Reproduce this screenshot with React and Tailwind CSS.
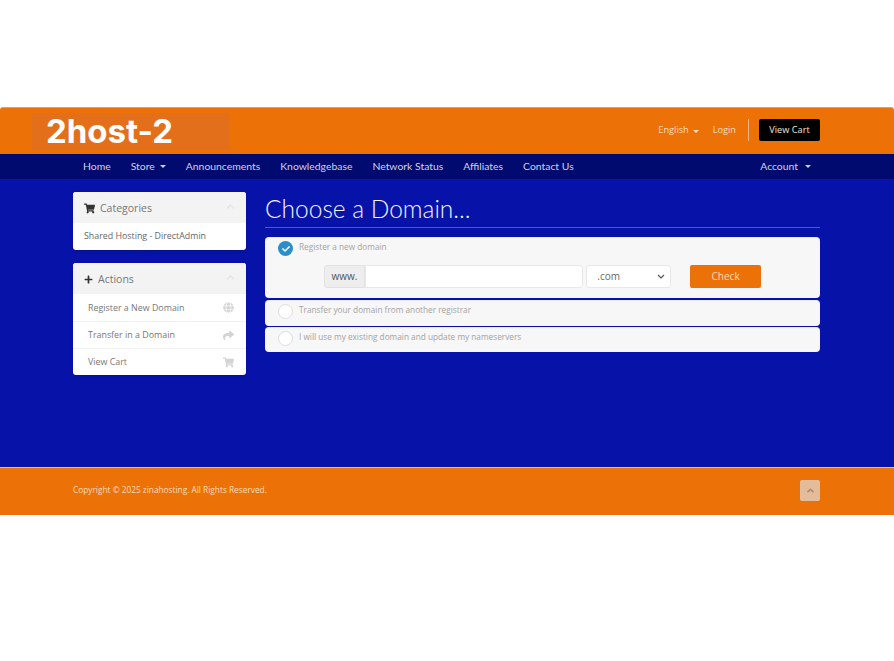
import React from "react";
import { FaShoppingCart, FaPlus, FaGlobe, FaShare, FaChevronUp, FaAngleUp, FaCheck } from "react-icons/fa";

const openSans = "font-['Open_Sans',sans-serif]";
const navFont = "font-['Lato',sans-serif]";

const navLinks = [
  { label: "Home" },
  { label: "Store", caret: true },
  { label: "Announcements" },
  { label: "Knowledgebase" },
  { label: "Network Status" },
  { label: "Affiliates" },
  { label: "Contact Us" },
];

const actions = [
  { label: "Register a New Domain", icon: FaGlobe },
  { label: "Transfer in a Domain", icon: FaShare },
  { label: "View Cart", icon: FaShoppingCart },
];

function Caret() {
  return <span className="inline-block w-0 h-0 border-x-[3.5px] border-x-transparent border-t-[3.5px] border-t-current" />;
}

function PanelHeader({ icon: Icon, iconClass, title }) {
  return (
    <div className="h-[31px] bg-[#f3f3f3] rounded-t-[3px] flex items-center pl-[11px] pr-[11px] pt-[2px]">
      <Icon className={`text-[#333] mr-[5px] ${iconClass}`} />
      <span className="text-[10.5px] text-[#777]">{title}</span>
      <FaChevronUp className="ml-auto mb-[5px] text-[9px] text-[#e4e4e4]" />
    </div>
  );
}

function DomainOption({ label, checked, children, className }) {
  return (
    <div className={`bg-[#f7f7f7] rounded-[4px] border-t border-[#e9e9f5] pl-[13px] pr-[59px] ${className}`}>
      <div className="flex items-start pt-[3px]">
        {checked ? (
          <span className="w-[15px] h-[15px] rounded-full bg-[#2a8fc9] flex items-center justify-center">
            <FaCheck className="text-[8px] text-white" />
          </span>
        ) : (
          <span className="w-[15px] h-[15px] rounded-full bg-white border border-[#ddd]" />
        )}
        <span className="ml-[6px] -mt-px text-[8.25px] leading-[13px] text-[#a3a3a3]">{label}</span>
      </div>
      {children}
    </div>
  );
}

export default function App() {
  return (
    <div className={`min-h-screen bg-white pt-[107px] ${openSans}`}>
      {/* Header */}
      <header className="h-[47px] bg-[#ec7207] rounded-t-[3px] border-t border-[#f29a50] flex items-center pr-[74px]">
        <div className="ml-[32px] w-[198px] h-[37px] bg-[#e46f1b] flex items-center pl-[14px]">
          <span className="font-['Inter',sans-serif] font-bold text-[33px] leading-none text-white">2host-2</span>
        </div>
        <div className="ml-auto mb-[3px] flex items-center text-[9.2px] text-[#fbdcbf]">
          <span>English</span>
          <span className="ml-[4px] mr-[14px]"><Caret /></span>
          <span>Login</span>
          <span className="w-px h-[22px] bg-[#f3b47f] ml-[12px] mr-[10px]" />
          <span className="w-[61px] h-[22px] bg-black rounded-[2px] flex items-center justify-center text-[#f2e6d8]">View Cart</span>
        </div>
      </header>

      {/* Nav */}
      <nav className={`h-[25px] bg-[#010a6e] flex items-center pl-[83px] pr-[83px] text-[10.4px] text-[#cfd2ee] ${navFont}`}>
        <div className="flex items-center gap-[20px]">
          {navLinks.map((link) => (
            <span key={link.label} className="flex items-center gap-[5px]">
              {link.label}
              {link.caret && <Caret />}
            </span>
          ))}
        </div>
        <span className="ml-auto flex items-center gap-[7px]">Account <Caret /></span>
      </nav>

      {/* Main */}
      <main className="h-[288px] bg-[#0713a8] flex pl-[73px] pr-[74px] pt-[13px] gap-[19px]">
        <aside className="w-[173px] shrink-0 flex flex-col gap-[13px]">
          <div className="bg-white rounded-[3px] shadow-sm">
            <PanelHeader icon={FaShoppingCart} iconClass="text-[11px]" title="Categories" />
            <div className="h-[27px] flex items-center pl-[11px] text-[8.85px] text-[#666]">Shared Hosting - DirectAdmin</div>
          </div>
          <div className="bg-white rounded-[3px] shadow-sm">
            <PanelHeader icon={FaPlus} iconClass="text-[9px]" title="Actions" />
            {actions.map((a, i) => (
              <div key={a.label} className={`h-[27px] flex items-center pl-[15px] pr-[12px] text-[8.9px] text-[#777] ${i > 0 ? "border-t border-[#f1f1f1]" : ""}`}>
                {a.label}
                <a.icon className="ml-auto text-[11px] text-[#d4d4d4]" />
              </div>
            ))}
          </div>
        </aside>

        <section className="flex-1 min-w-0">
          <h1 className={`h-[36px] border-b border-[#5258c2] text-[24.5px] leading-[33px] font-light text-[#f2f3fb] ${navFont}`}>Choose a Domain...</h1>
          <DomainOption label="Register a new domain" checked className="mt-[9px] h-[61px]">
            <div className="flex items-center ml-[46px] mt-[9px]">
              <span className="w-[41px] h-[23px] bg-[#eeeeee] border border-[#e2e2e2] rounded-l-[3px] flex items-center justify-center text-[10px] text-[#555]">www.</span>
              <span className="w-[219px] h-[23px] bg-white border border-[#e8e8e8] rounded-r-[3px]" />
              <span className="ml-[3px] w-[85px] h-[23px] bg-white border border-[#e8e8e8] rounded-[3px] flex items-center pl-[10px] pr-[5px] text-[10px] text-[#666]">
                .com
                <svg className="ml-auto" width="8" height="5" viewBox="0 0 8 5" fill="none" stroke="#555" strokeWidth="1.2"><path d="M1 1l3 3 3-3" /></svg>
              </span>
              <span className="ml-[19px] w-[71px] h-[23px] bg-[#ec7207] rounded-[2px] flex items-center justify-center text-[10px] text-[#fbdcbf]">Check</span>
            </div>
          </DomainOption>
          <DomainOption label="Transfer your domain from another registrar" className="mt-[2px] h-[26px]" />
          <DomainOption label="I will use my existing domain and update my nameservers" className="mt-px h-[25px]" />
        </section>
      </main>

      {/* Footer */}
      <footer className="h-[48px] bg-[#ec7207] border-t border-[#c9c3c9] flex items-center pl-[73px] pr-[74px] pb-[2px]">
        <span className="text-[8.3px] text-[#fbdcbf]">Copyright © 2025 zinahosting. All Rights Reserved.</span>
        <span className="ml-auto w-[20px] h-[21px] bg-[#e3bc9c] rounded-[2px] flex items-center justify-center">
          <FaAngleUp className="text-[11px] text-[#b08a6e]" />
        </span>
      </footer>
    </div>
  );
}
